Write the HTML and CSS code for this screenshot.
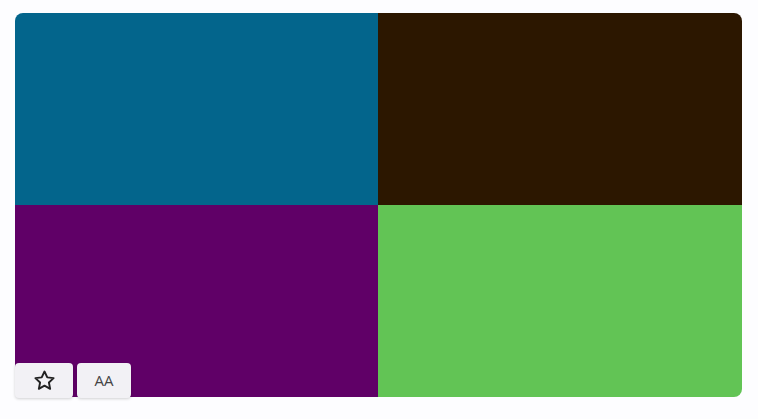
FILE: index.html
```html
<!DOCTYPE html>
<html>
<head>
<meta charset="utf-8">
<link rel="stylesheet" href="styles.css">
</head>
<body>
<div class="card">
  <div class="grid">
    <div class="cell blue"></div>
    <div class="cell brown"></div>
    <div class="cell purple"></div>
    <div class="cell green"></div>
  </div>
  <div class="actions">
    <button class="btn star" aria-label="Favorite">
      <svg width="23" height="23" viewBox="0 0 24 24" fill="none" stroke="#222" stroke-width="2" stroke-linejoin="round"><path d="M12 2.6l2.9 6.1 6.6.8-4.9 4.6 1.3 6.6L12 17.4l-5.9 3.3 1.3-6.6-4.9-4.6 6.6-.8z"/></svg>
    </button>
    <button class="btn aa">AA</button>
  </div>
</div>
</body>
</html>
```
FILE: styles.css
```css
html, body { margin: 0; padding: 0; }
body { background: #fdfdff; width: 758px; height: 419px; font-family: "Open Sans", "Liberation Sans", sans-serif; }
.card { position: relative; margin: 13px 0 0 15px; width: 727px; height: 384px; }
.grid { display: grid; grid-template-columns: 363px 364px; grid-template-rows: 192px 192px; width: 100%; height: 100%; border-radius: 8px; overflow: hidden; }
.blue { background: #03658c; }
.brown { background: #2c1700; }
.purple { background: #600067; }
.green { background: #62c455; }
.actions { position: absolute; left: 0; bottom: -1px; display: flex; gap: 4px; }
.btn { border: none; margin: 0; padding: 0 0 1px; height: 35px; background: #f2f1f5; border-radius: 4px; display: flex; align-items: center; justify-content: center; box-shadow: 0 1px 3px rgba(0,0,0,0.18); cursor: pointer; }
.star { width: 58px; }
.aa { width: 54px; font-size: 15px; color: #444; font-family: "Open Sans", "Liberation Sans", sans-serif; }
```
